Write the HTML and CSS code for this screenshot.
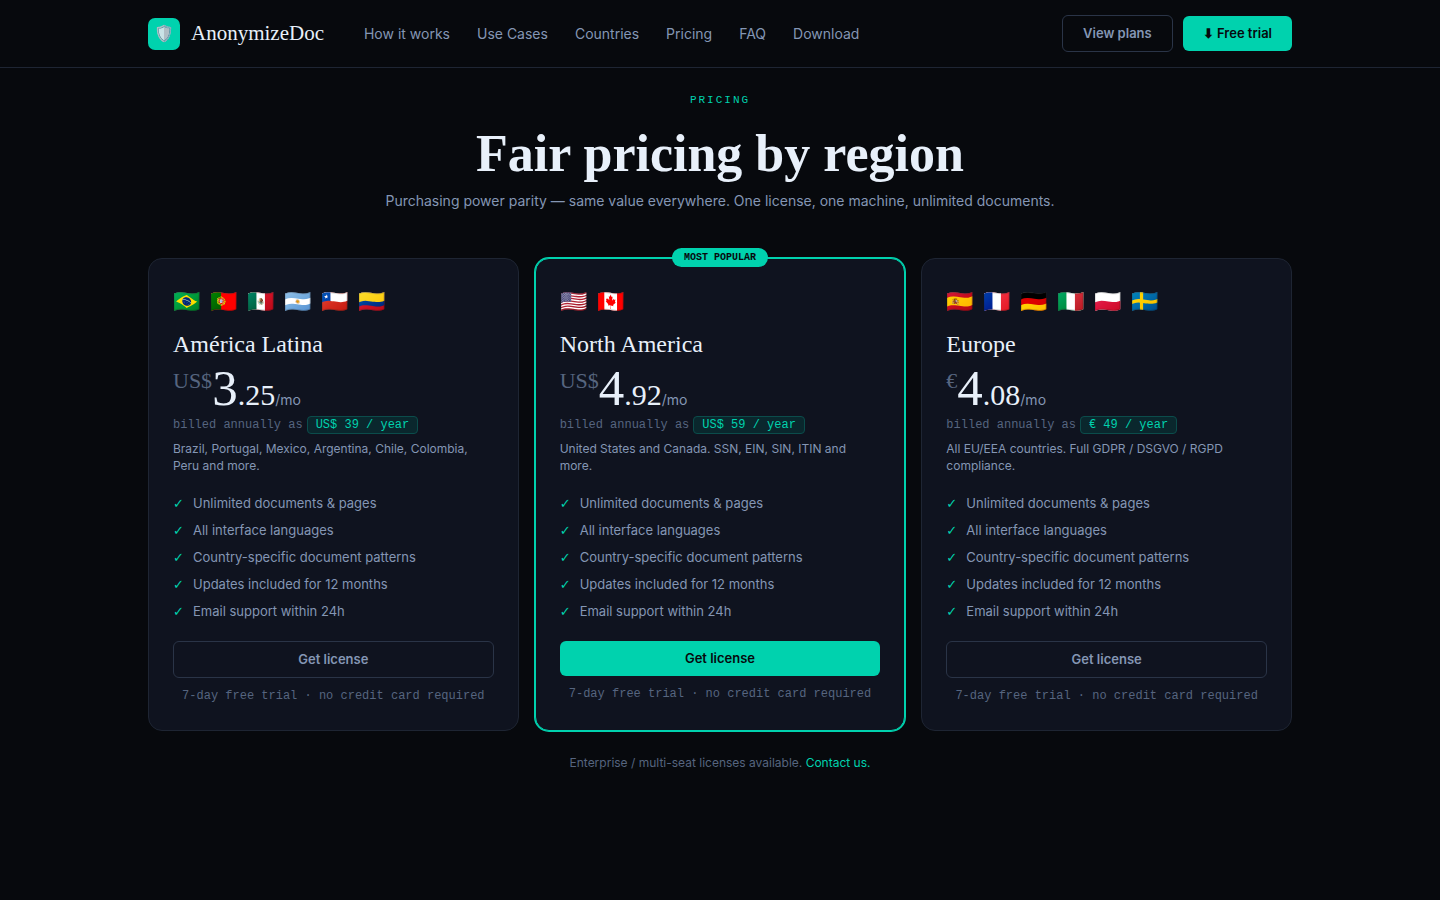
FILE: index.html
```html
<!DOCTYPE html>
<html lang="en">
<head>
<meta charset="utf-8">
<title>AnonymizeDoc – Pricing</title>
<link rel="stylesheet" href="styles.css">
</head>
<body>
<header class="topbar">
  <div class="container topbar-inner">
    <a class="brand" href="#"><span class="brand-mark">🛡️</span><span>AnonymizeDoc</span></a>
    <nav class="menu">
      <a href="#how">How it works</a>
      <a href="#cases">Use Cases</a>
      <a href="#countries">Countries</a>
      <a href="#pricing">Pricing</a>
      <a href="#faq">FAQ</a>
      <a href="#download">Download</a>
    </nav>
    <div class="actions">
      <button class="btn btn-ghost" type="button">View plans</button>
      <button class="btn btn-solid" type="button">⬇ Free trial</button>
    </div>
  </div>
</header>
<main class="container pricing" id="pricing">
  <p class="eyebrow">PRICING</p>
  <h1 class="title">Fair pricing by region</h1>
  <p class="lead">Purchasing power parity — same value everywhere. One license, one machine, unlimited documents.</p>
  <div class="cards">
    <article class="card">
      <div class="flags"><span>🇧🇷</span><span>🇵🇹</span><span>🇲🇽</span><span>🇦🇷</span><span>🇨🇱</span><span>🇨🇴</span></div>
      <h2 class="region">América Latina</h2>
      <div class="price"><span class="currency">US$</span><span class="whole">3</span><span class="cents">.25</span><span class="per">/mo</span></div>
      <div class="billed">billed annually as <span class="pill">US$ 39 / year</span></div>
      <p class="desc">Brazil, Portugal, Mexico, Argentina, Chile, Colombia, Peru and more.</p>
      <ul class="features">
        <li>Unlimited documents &amp; pages</li>
        <li>All interface languages</li>
        <li>Country-specific document patterns</li>
        <li>Updates included for 12 months</li>
        <li>Email support within 24h</li>
      </ul>
      <button class="btn btn-ghost" type="button">Get license</button>
      <p class="note">7-day free trial · no credit card required</p>
    </article>
    <article class="card card-featured">
      <div class="badge">MOST POPULAR</div>
      <div class="flags"><span>🇺🇸</span><span>🇨🇦</span></div>
      <h2 class="region">North America</h2>
      <div class="price"><span class="currency">US$</span><span class="whole">4</span><span class="cents">.92</span><span class="per">/mo</span></div>
      <div class="billed">billed annually as <span class="pill">US$ 59 / year</span></div>
      <p class="desc">United States and Canada. SSN, EIN, SIN, ITIN and more.</p>
      <ul class="features">
        <li>Unlimited documents &amp; pages</li>
        <li>All interface languages</li>
        <li>Country-specific document patterns</li>
        <li>Updates included for 12 months</li>
        <li>Email support within 24h</li>
      </ul>
      <button class="btn btn-solid" type="button">Get license</button>
      <p class="note">7-day free trial · no credit card required</p>
    </article>
    <article class="card">
      <div class="flags"><span>🇪🇸</span><span>🇫🇷</span><span>🇩🇪</span><span>🇮🇹</span><span>🇵🇱</span><span>🇸🇪</span></div>
      <h2 class="region">Europe</h2>
      <div class="price"><span class="currency">€</span><span class="whole">4</span><span class="cents">.08</span><span class="per">/mo</span></div>
      <div class="billed">billed annually as <span class="pill">€ 49 / year</span></div>
      <p class="desc">All EU/EEA countries. Full GDPR / DSGVO / RGPD compliance.</p>
      <ul class="features">
        <li>Unlimited documents &amp; pages</li>
        <li>All interface languages</li>
        <li>Country-specific document patterns</li>
        <li>Updates included for 12 months</li>
        <li>Email support within 24h</li>
      </ul>
      <button class="btn btn-ghost" type="button">Get license</button>
      <p class="note">7-day free trial · no credit card required</p>
    </article>
  </div>
  <p class="enterprise">Enterprise / multi-seat licenses available. <a href="#contact">Contact us.</a></p>
</main>
</body>
</html>
```
FILE: styles.css
```css
:root {
  --bg: #07090d;
  --card: #0f131f;
  --line: #1e2533;
  --line-strong: #2a3447;
  --text: #e8f0fa;
  --muted: #8496b4;
  --dim: #56657f;
  --accent: #00d2ae;
  --sans: Inter, "Noto Sans", sans-serif;
  --serif: "Liberation Serif", serif;
  --mono: "Liberation Mono", monospace;
}
* { box-sizing: border-box; }
body {
  margin: 0;
  background: var(--bg);
  color: var(--text);
  font-family: var(--sans);
  font-size: 14px;
}
a { color: inherit; text-decoration: none; }
h1, h2, p, ul { margin: 0; padding: 0; }
.container { max-width: 1200px; margin: 0 auto; padding: 0 28px; }
.topbar { border-bottom: 1px solid var(--line); }
.topbar-inner { display: flex; align-items: center; min-height: 67px; }
.brand {
  display: flex;
  align-items: center;
  gap: 11px;
  font-family: var(--serif);
  font-size: 21px;
}
.brand-mark {
  display: flex;
  align-items: center;
  justify-content: center;
  width: 32px;
  height: 32px;
  border-radius: 7px;
  background: var(--accent);
  font-size: 16px;
}
.menu { display: flex; gap: 27px; margin-left: 40px; color: var(--muted); }
.actions { display: flex; align-items: center; gap: 10px; margin-left: auto; }
.btn {
  padding: 10px 20px;
  border: 0;
  border-radius: 6px;
  font: 600 13px/15px var(--sans);
  cursor: pointer;
}
.btn-solid { background: var(--accent); color: #07090d; }
.btn-ghost { background: transparent; border: 1px solid var(--line-strong); color: var(--muted); }
.pricing { padding-top: 24px; padding-bottom: 120px; text-align: center; }
.eyebrow {
  color: var(--accent);
  font: 11px/16px var(--mono);
  letter-spacing: 2px;
}
.title { margin-top: 16px; font: 700 52px/60px var(--serif); }
.lead { margin-top: 6px; color: var(--muted); line-height: 22px; }
.cards {
  display: grid;
  grid-template-columns: repeat(3, 1fr);
  gap: 16px;
  margin-top: 46px;
  text-align: left;
}
.card {
  position: relative;
  display: flex;
  flex-direction: column;
  padding: 28px 24px 26px;
  border: 1px solid var(--line);
  border-radius: 14px;
  background: var(--card);
}
.card-featured { border-color: var(--accent); box-shadow: 0 0 0 1px var(--accent); }
.badge {
  position: absolute;
  top: -11px;
  left: 50%;
  transform: translateX(-50%);
  padding: 3px 12px;
  border-radius: 10px;
  background: var(--accent);
  color: #07090d;
  font: 700 10px/13px var(--mono);
  white-space: nowrap;
}
.flags { display: flex; gap: 10px; font-size: 22px; line-height: 28px; }
.region { margin-top: 14px; font: 400 24px/30px var(--serif); }
.price { display: flex; align-items: baseline; height: 50px; margin-top: 4px; font-family: var(--serif); line-height: 50px; }
.currency { align-self: flex-start; color: var(--dim); font-size: 22px; line-height: 36px; }
.whole { font-size: 51px; }
.cents { font-size: 30px; }
.per { color: var(--muted); font-family: var(--sans); font-size: 14px; }
.billed { display: flex; align-items: center; gap: 4px; margin-top: 3px; color: var(--dim); font: 12px/16px var(--mono); }
.pill {
  padding: 0 8px;
  border: 1px solid #0b4c4b;
  border-radius: 4px;
  background: #0a272d;
  color: var(--accent);
}
.desc { margin-top: 6px; color: var(--muted); font-size: 12px; line-height: 17px; }
.features {
  display: grid;
  gap: 10px;
  margin: 21px 0;
  color: var(--muted);
  font-size: 13px;
  line-height: 17px;
  list-style: none;
}
.features li { display: flex; }
.features li::before { content: "✓"; width: 20px; color: var(--accent); font-family: "DejaVu Sans", sans-serif; font-weight: 700; }
.note { margin-top: 10px; color: var(--dim); font: 12px/16px var(--mono); text-align: center; }
.enterprise { margin-top: 24px; color: var(--dim); font-size: 12px; line-height: 16px; }
.enterprise a { color: var(--accent); }
```
